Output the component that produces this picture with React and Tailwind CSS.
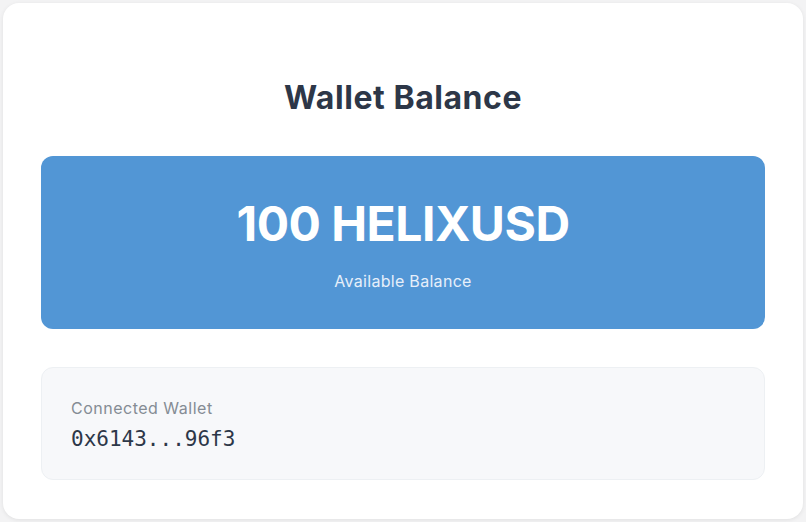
import React from 'react';

const WalletBalance = () => {
  return (
    <div
      className="h-[522px] w-[806px] bg-[#f3f3f4] p-[3px]"
      style={{ fontFamily: 'Inter, "Noto Sans", sans-serif' }}
    >
      <div className="h-[516px] w-[800px] rounded-2xl bg-white px-[38px] pt-[75px] shadow-[0_1px_4px_rgba(0,0,0,0.08)]">
        {/* Header */}
        <h1 className="text-center text-[32px] font-bold leading-[40px] tracking-[0.55px] text-[#2d3748]">
          Wallet Balance
        </h1>

        {/* Balance card */}
        <div className="mt-[38px] flex h-[173px] flex-col items-center rounded-xl bg-[#5296d5] pt-[38px]">
          <div className="text-[48px] font-bold leading-[60px] tracking-[-0.5px] text-white">100 HELIXUSD</div>
          <div className="mt-[15px] text-[16px] leading-[24px] tracking-[0.3px] text-[#e6effa]">Available Balance</div>
        </div>

        {/* Connected wallet */}
        <div className="mt-[38px] h-[113px] rounded-xl border border-[#edf0f3] bg-[#f7f8fa] px-[29px] pt-[28px]">
          <div className="text-[16px] leading-[24px] tracking-[0.5px] text-[#858c94]">Connected Wallet</div>
          <div
            className="mt-[5px] text-[21px] leading-[28px] text-[#2d3748]"
            style={{ fontFamily: '"DejaVu Sans Mono", monospace' }}
          >
            0x6143...96f3
          </div>
        </div>
      </div>
    </div>
  );
};

export default function App() {
  return <WalletBalance />;
}
